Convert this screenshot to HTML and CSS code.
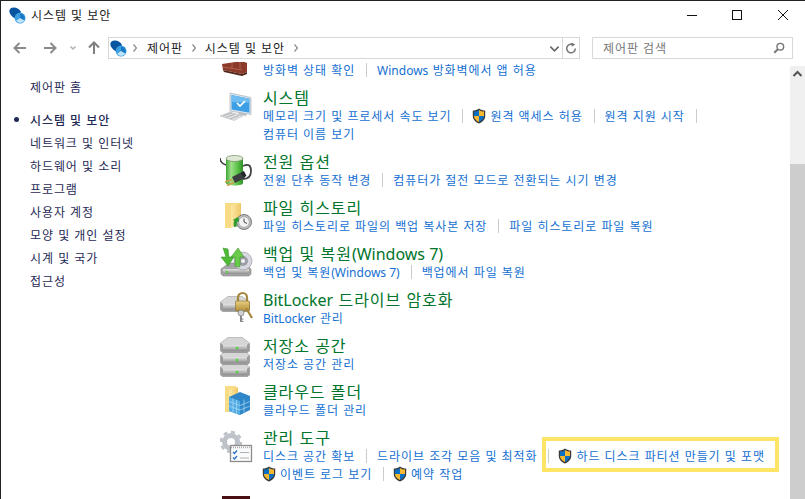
FILE: index.html
```html
<!DOCTYPE html>
<html lang="ko">
<head>
<meta charset="utf-8">
<title>시스템 및 보안</title>
<link rel="stylesheet" href="styles.css">
</head>
<body>
<svg class="defs" width="0" height="0" aria-hidden="true">
  <defs>
    <symbol id="sec" viewBox="0 0 20 20">
      <path d="M5.500 .5C2.500 .5 .4 2.200.4 5c0 3.500 3 5.800 6 8.200l6.600-3 1-4.700C12.500 2.500 9.500.5 5.500.5z" fill="#0a559f"/>
      <circle cx="13" cy="13" r="6.400" fill="#3d9fe0"/>
      <path d="M13 13l-4.600 3.200a5.600 5.600 0 0 0 9.700-.7z" fill="#bfe3f8"/>
      <path d="M13 7.500V13l4.900 2.500A5.600 5.600 0 0 0 13 7.500z" fill="#1b78c4"/>
    </symbol>
    <symbol id="shield" viewBox="0 0 14 16">
      <path d="M7 .5C5 2 3 2.600.8 2.600v5.400c0 3.500 2.700 6 6.200 7.500 3.500-1.500 6.200-4 6.200-7.500V2.600C11 2.600 9 2 7 .5z" fill="#3c3a36"/>
      <path d="M7 2C5.500 3 3.700 3.500 2 3.600V8h5z" fill="#0b6fc4"/>
      <path d="M7 2c1.500 1 3.300 1.500 5 1.600V8H7z" fill="#f7b92f"/>
      <path d="M2 8h5v6C4.200 12.700 2 10.800 2 8z" fill="#f7b92f"/>
      <path d="M7 8h5c0 2.800-2.200 4.700-5 6z" fill="#0b6fc4"/>
    </symbol>
    <linearGradient id="folder" x1="0" y1="0" x2="1" y2="0">
      <stop offset="0" stop-color="#fde9a6"/><stop offset="1" stop-color="#eec766"/>
    </linearGradient>
    <linearGradient id="disk" x1="0" y1="0" x2="0" y2="1">
      <stop offset="0" stop-color="#e4e4e4"/><stop offset="1" stop-color="#8c8c8c"/>
    </linearGradient>
    <linearGradient id="batt" x1="0" y1="0" x2="1" y2="0">
      <stop offset="0" stop-color="#3fa535"/><stop offset=".3" stop-color="#9fe08a"/><stop offset=".7" stop-color="#58c045"/><stop offset="1" stop-color="#2f8f2a"/>
    </linearGradient>
    <linearGradient id="gold" x1="0" y1="0" x2="0" y2="1">
      <stop offset="0" stop-color="#e8cd80"/><stop offset="1" stop-color="#b58f38"/>
    </linearGradient>
    <symbol id="drive" viewBox="0 0 30 16">
      <path d="M.5 6L8 .5h14L29.500 6v8l-2 1.500h-25L.5 14z" fill="#9c9c9c" stroke="#808080" stroke-width=".5"/>
      <path d="M.5 6L8 .5h14L29.500 6 27 8H3z" fill="#d6d6d6"/>
      <path d="M3 8h24v6H3z" fill="url(#disk)"/>
      <circle cx="17" cy="11" r="1.300" fill="#4fd63a"/>
    </symbol>
  </defs>
</svg>

<header class="titlebar">
  <div class="title">
    <svg class="ico16"><use href="#sec"/></svg>
    <span class="lift">시스템 및 보안</span>
  </div>
  <div class="winbtns">
    <svg class="winbtn" viewBox="0 0 46 30"><path d="M19 15.500h10" stroke="#111" fill="none"/></svg>
    <svg class="winbtn" viewBox="0 0 46 30"><rect x="18.500" y="10.500" width="9" height="9" stroke="#111" fill="none"/></svg>
    <svg class="winbtn" viewBox="0 0 46 30"><path d="M18 10l10 10M28 10L18 20" stroke="#111" fill="none"/></svg>
  </div>
</header>

<nav class="navbar">
  <div class="navbtns">
    <svg class="navbtn" viewBox="0 0 30 22"><path d="M17 11H6M10.500 6L5.500 11l5 5" stroke="#8a8a8a" stroke-width="2" fill="none"/></svg>
    <svg class="navbtn" viewBox="0 0 30 22"><path d="M5 11h11M11.500 6l5 5-5 5" stroke="#8a8a8a" stroke-width="2" fill="none"/></svg>
    <svg class="navdrop" viewBox="0 0 10 22"><path d="M1.500 9.500l2.500 2.500 2.500-2.500" stroke="#b0b0b0" stroke-width="1.500" fill="none"/></svg>
    <svg class="navup" viewBox="0 0 20 22"><path d="M10 17V6M5 10.500L10 5.500l5 5" stroke="#7f7f7f" stroke-width="2" fill="none"/></svg>
  </div>
  <div class="address">
    <svg class="ico16"><use href="#sec"/></svg>
    <svg class="chev first" viewBox="0 0 4 8"><path d="M.5 .5L3.500 4 .5 7.500" stroke="#888" stroke-width="1.200" fill="none"/></svg>
    <span class="lift">제어판</span>
    <svg class="chev" viewBox="0 0 4 8"><path d="M.5 .5L3.500 4 .5 7.500" stroke="#888" stroke-width="1.200" fill="none"/></svg>
    <span class="lift">시스템 및 보안</span>
    <svg class="chev" viewBox="0 0 4 8"><path d="M.5 .5L3.500 4 .5 7.500" stroke="#888" stroke-width="1.200" fill="none"/></svg>
    <span class="grow"></span>
    <svg class="adrop" viewBox="0 0 12 12"><path d="M1.500 4l4.500 4.500L10.500 4" stroke="#666" stroke-width="1.800" fill="none"/></svg>
    <span class="refresh">
      <svg viewBox="0 0 14 14" width="12" height="12"><path d="M9.500 3.200a5 5 0 1 0 2.500 4.300" stroke="#777" stroke-width="1.800" fill="none"/><path d="M7.500.5l4.500 2.500-4 2.500z" fill="#777"/></svg>
    </span>
  </div>
  <div class="search">
    <span class="lift">제어판 검색</span>
    <svg viewBox="0 0 14 14" width="12" height="12"><circle cx="8.500" cy="5.500" r="3.900" stroke="#777" stroke-width="1.700" fill="none"/><path d="M6 8l-4.500 4.500" stroke="#777" stroke-width="2.400"/></svg>
  </div>
</nav>

<div class="main">
  <aside class="side">
    <a class="side-home">제어판 홈</a>
    <a class="side-item current">시스템 및 보안</a>
    <a class="side-item">네트워크 및 인터넷</a>
    <a class="side-item">하드웨어 및 소리</a>
    <a class="side-item">프로그램</a>
    <a class="side-item">사용자 계정</a>
    <a class="side-item">모양 및 개인 설정</a>
    <a class="side-item">시계 및 국가</a>
    <a class="side-item">접근성</a>
  </aside>

  <section class="content">
    <div class="scrolled">
      <article class="cat">
        <svg class="cat-ico" viewBox="0 0 32 32">
          <path d="M2 19l20-3 5 2v9l-5 2-19-4z" fill="#8c3b2b"/>
          <path d="M3 25l19 4 5-2v2l-5 2-18-4z" fill="#4f241b"/>
          <path d="M3 22l19 3M12 18v6M20 17v7" stroke="#b86a55" stroke-width=".8"/>
        </svg>
        <div class="cat-body">
          <h2 class="cat-head">방화벽</h2>
          <p class="links"><a>방화벽 상태 확인</a><i></i><a><span class="la">Windows</span> 방화벽에서 앱 허용</a></p>
        </div>
      </article>

      <article class="cat">
        <svg class="cat-ico" viewBox="0 0 32 32">
          <path d="M10 2l21 4.500v17L10 20z" fill="#dfe6ec" stroke="#9aa7b2" stroke-width=".6"/>
          <path d="M11.500 4l18 3.800v14L11.500 18.500z" fill="#3d9fe6"/>
          <path d="M11.500 4l18 3.800v4L11.500 11z" fill="#6dbcf2"/>
          <path d="M17 12l3 3 5-5" stroke="#fff" stroke-width="1.700" fill="none"/>
          <path d="M19 21l8 1.500-1 2.500-8-1.500z" fill="#b8c0c8"/>
          <path d="M0 25l10-4 13 4-9 4.500z" fill="#dde0e3" stroke="#b5b5b5" stroke-width=".5"/>
          <path d="M3 25l9-3.200M6 26.500l9-3.500M10 28l9-3.500" stroke="#a0a0a0" stroke-width=".7"/>
        </svg>
        <div class="cat-body">
          <h2 class="cat-head">시스템</h2>
          <p class="links"><a>메모리 크기 및 프로세서 속도 보기</a><i></i><a class="uac"><svg class="shield"><use href="#shield"/></svg>원격 액세스 허용</a><i></i><a>원격 지원 시작</a><i></i></p>
          <p class="links"><a>컴퓨터 이름 보기</a></p>
        </div>
      </article>

      <article class="cat">
        <svg class="cat-ico" viewBox="0 0 32 32">
          <path d="M0 3c0 4 3 6 6 7" stroke="#444" stroke-width="1.600" fill="none"/>
          <path d="M23 11c6-3 8 0 8 5 0 6-4 8-8 8" stroke="#444" stroke-width="1.800" fill="none"/>
          <path d="M6 3h17v25c0 1.500-3 2.500-8.500 2.500S6 29.500 6 28z" fill="url(#batt)"/>
          <ellipse cx="14.500" cy="3.500" rx="8.500" ry="3" fill="#dfe8d6" stroke="#6b8a58" stroke-width=".7"/>
          <path d="M12 22l10-5 3 6-10 5z" fill="#3b3f42"/>
          <path d="M21 17.500l3-1.500 2.500 5-3 1.500z" fill="#23262a"/>
          <path d="M12.500 24.500l-7.500 2.500M14 27.500l-7 3" stroke="#c9a04c" stroke-width="1.800"/>
        </svg>
        <div class="cat-body">
          <h2 class="cat-head">전원 옵션</h2>
          <p class="links"><a>전원 단추 동작 변경</a><i></i><a>컴퓨터가 절전 모드로 전환되는 시기 변경</a></p>
        </div>
      </article>

      <article class="cat">
        <svg class="cat-ico" viewBox="0 0 32 32">
          <path d="M5 2h16v19L10 27H5z" fill="#f8dc85"/>
          <path d="M11 5l10-3v20l-10 5z" fill="url(#folder)"/>
          <circle cx="24" cy="21" r="7.500" fill="#bdbdbd" stroke="#7a7a7a"/>
          <circle cx="24" cy="21" r="5.300" fill="#f2f2f2" stroke="#999" stroke-width=".6"/>
          <path d="M24 17.500V21l3 1.500" stroke="#444" fill="none"/>
          <path d="M14 26a9 9 0 0 1 3-9.500l1.500 2.500a6 6 0 0 0-1.500 6.500z" fill="#2f9d2d"/>
          <path d="M12.500 19l6-3 .5 5z" fill="#2f9d2d"/>
        </svg>
        <div class="cat-body">
          <h2 class="cat-head">파일 히스토리</h2>
          <p class="links"><a>파일 히스토리로 파일의 백업 복사본 저장</a><i></i><a>파일 히스토리로 파일 복원</a></p>
        </div>
      </article>

      <article class="cat">
        <svg class="cat-ico" viewBox="0 0 32 32">
          <path d="M1 22l8-6h16l6 6v5l-2 2H3l-2-2z" fill="#a5a5a5" stroke="#777" stroke-width=".5"/>
          <path d="M3 22h26v5H3z" fill="url(#disk)"/>
          <circle cx="7" cy="25" r="1.200" fill="#4fd63a"/>
          <circle cx="23" cy="14" r="9" fill="#d8d8e2" stroke="#8f8f8f" stroke-width=".6"/>
          <circle cx="23" cy="14" r="5" fill="#9c9ca6"/>
          <circle cx="23" cy="14" r="2" fill="#f2f2f2"/>
          <path d="M3 1l5 1 1 8h5l-6 9-7-9h5z" fill="#4fbb34" stroke="#2f8a22" stroke-width=".5"/>
          <path d="M18 1l6 9h-4v10l-5-1V10h-4z" fill="#6acb4a" stroke="#2f8a22" stroke-width=".5"/>
        </svg>
        <div class="cat-body">
          <h2 class="cat-head">백업 및 복원<span class="la">(Windows 7)</span></h2>
          <p class="links"><a>백업 및 복원<span class="la">(Windows 7)</span></a><i></i><a>백업에서 파일 복원</a></p>
        </div>
      </article>

      <article class="cat">
        <svg class="cat-ico" viewBox="0 0 32 32">
          <use href="#drive" x="0" y="3" width="30" height="16"/>
          <path d="M18 9V4.500a4.500 4.500 0 0 1 9 0V9" stroke="#a5873d" stroke-width="2.200" fill="none"/>
          <rect x="15.500" y="8" width="14" height="10" rx="1" fill="url(#gold)" stroke="#86692a" stroke-width=".6"/>
          <path d="M26 15l6 10" stroke="#a5873d" stroke-width="2.200"/>
          <circle cx="21" cy="20" r="3" fill="#d0d0d0" stroke="#777" stroke-width=".7"/>
          <path d="M21 23v6" stroke="#888" stroke-width="2"/>
          <path d="M21.500 26h2M21.500 28.500h2" stroke="#888"/>
        </svg>
        <div class="cat-body">
          <h2 class="cat-head"><span class="la">BitLocker</span> 드라이브 암호화</h2>
          <p class="links"><a><span class="la">BitLocker</span> 관리</a></p>
        </div>
      </article>

      <article class="cat">
        <svg class="cat-ico" viewBox="0 0 32 32">
          <use href="#drive" x="0" y="22" width="30" height="16"/>
          <use href="#drive" x="0" y="10" width="30" height="16"/>
          <use href="#drive" x="0" y="-2" width="30" height="16"/>
        </svg>
        <div class="cat-body">
          <h2 class="cat-head">저장소 공간</h2>
          <p class="links"><a>저장소 공간 관리</a></p>
        </div>
      </article>

      <article class="cat">
        <svg class="cat-ico" viewBox="0 0 32 32">
          <path d="M5 1h11v22L9 27H5z" fill="#f8dc85"/>
          <path d="M9 5l9-3v19L9 27z" fill="url(#folder)"/>
          <path d="M20 7l10 4v14l-10 5-11-4V12z" fill="#2f86c8"/>
          <path d="M9 12l11 4v14L9 26z" fill="#55ace4"/>
          <path d="M9 16.500l11 4 10-4M9 21l11 4 10-4M13 13.500v14M16.500 15v14M24 14.500v13" stroke="#a9dcf5" stroke-width=".7" fill="none"/>
        </svg>
        <div class="cat-body">
          <h2 class="cat-head">클라우드 폴더</h2>
          <p class="links"><a>클라우드 폴더 관리</a></p>
        </div>
      </article>

      <article class="cat">
        <svg class="cat-ico" viewBox="0 0 32 32">
          <circle cx="11" cy="11" r="6.500" fill="none" stroke="#bcc2c8" stroke-width="5"/>
          <circle cx="11" cy="11" r="10" fill="none" stroke="#bcc2c8" stroke-width="2.500" stroke-dasharray="4 3.800"/>
          <rect x="10.500" y="14.500" width="21" height="16" fill="#fafbfc" stroke="#8d8d8d" stroke-width="1.300"/>
          <path d="M11 16.500h20" stroke="#aaa" stroke-width="1.500" stroke-dasharray="1 1"/>
          <path d="M13 21l1.500 1.500 2.500-3M13 26.500l1.500 1.500 2.500-3" stroke="#2c6fc4" stroke-width="1.300" fill="none"/>
          <path d="M20 21.500h9M20 27h9" stroke="#b0b0b0"/>
        </svg>
        <div class="cat-body">
          <h2 class="cat-head">관리 도구</h2>
          <p class="links"><a>디스크 공간 확보</a><i></i><a>드라이브 조각 모음 및 최적화</a><i></i><a class="uac marked"><svg class="shield"><use href="#shield"/></svg>하드 디스크 파티션 만들기 및 포맷</a></p>
          <p class="links"><a class="uac"><svg class="shield"><use href="#shield"/></svg>이벤트 로그 보기</a><i></i><a class="uac"><svg class="shield"><use href="#shield"/></svg>예약 작업</a></p>
        </div>
      </article>

      <article class="cat cat-next">
        <svg class="cat-ico" viewBox="0 0 32 32"><rect x="2" y="0" width="28" height="30" fill="#4a0f12"/></svg>
        <div class="cat-body"></div>
      </article>
    </div>
  </section>

  <div class="scrollbar">
    <svg class="sb-arrow" viewBox="0 0 15 17"><path d="M3.500 10l4-4 4 4" stroke="#555" stroke-width="2" fill="none"/></svg>
    <div class="sb-track"></div>
    <div class="sb-thumb"></div>
  </div>
</div>
</body>
</html>
```

FILE: styles.css
```css
* { box-sizing: border-box; }
html, body { margin: 0; height: 100%; }
body {
  width: 805px;
  height: 499px;
  overflow: hidden;
  background: #fff;
  border-top: 1px solid #222;
  border-left: 1px solid #222;
  font-family: "Noto Sans CJK KR", "Noto Sans", sans-serif;
  font-size: 12px;
  letter-spacing: .9px;
  color: #1a1a1a;
  display: flex;
  flex-direction: column;
}
.defs { position: absolute; }
a { cursor: pointer; }
.la { font-family: "Noto Sans", sans-serif; letter-spacing: 0; line-height: 0; }
.lift { margin-top: -2px; }

.titlebar {
  height: 28px;
  display: flex;
  justify-content: space-between;
  align-items: center;
  flex: none;
}
.title { display: flex; align-items: center; gap: 5px; padding-left: 8px; }
.ico16 { width: 17px; height: 17px; flex: none; }
.winbtns { display: flex; margin-right: -1px; }
.winbtn { width: 46px; height: 30px; }

.navbar {
  height: 22px;
  margin-top: 8px;
  display: flex;
  align-items: stretch;
  flex: none;
  padding-right: 12px;
}
.navbtns { width: 107px; flex: none; padding-left: 8px; display: flex; align-items: center; }
.navbtn { width: 30px; height: 22px; }
.navdrop { width: 10px; height: 22px; }
.navup { width: 20px; height: 22px; margin-left: 5px; }
.address {
  width: 472px;
  flex: none;
  border: 1px solid #d9d9d9;
  display: flex;
  align-items: center;
  padding-left: 1px;
}
.chev { width: 4px; height: 8px; margin: 0 9px; flex: none; }
.chev.first { margin: 0 10px 0 6px; }
.grow { flex: 1; }
.adrop { width: 11px; height: 11px; margin-right: 2px; }
.refresh {
  width: 17px;
  height: 100%;
  border-left: 1px solid #d9d9d9;
  display: flex;
  align-items: center;
  justify-content: center;
}
.search {
  width: 201px;
  flex: none;
  margin-left: 12px;
  border: 1px solid #d9d9d9;
  display: flex;
  align-items: center;
  justify-content: space-between;
  padding: 0 7px 0 10px;
  color: #777;
}

.main { flex: 1; display: flex; min-height: 0; margin-top: 3px; }
.side {
  width: 219px;
  flex: none;
  display: flex;
  flex-direction: column;
  padding: 13px 0 0 29px;
  color: #1f2a55;
}
.side-home { height: 23px; margin-bottom: 10px; line-height: 23px; }
.side-item { height: 23px; line-height: 23px; position: relative; }
.current { font-weight: 500; }
.current::before {
  content: "";
  position: absolute;
  left: -16px;
  top: 9px;
  width: 5px;
  height: 5px;
  border-radius: 50%;
  background: #1f2a55;
}

.content { flex: 1; overflow: hidden; min-width: 0; }
.scrolled { margin-top: -21px; display: flex; flex-direction: column; }
.cat { display: flex; gap: 11px; margin-bottom: 8px; }
.cat-next { margin-top: 1px; }
.cat-ico { width: 32px; height: 32px; flex: none; margin-top: 4px; overflow: visible; }
.cat-body { min-width: 0; }
.cat-head {
  margin: 0;
  font-size: 16px;
  font-weight: 400;
  line-height: 20px;
  color: #00752b;
  letter-spacing: .9px;
}
.links {
  margin: 0;
  display: flex;
  align-items: center;
  height: 18px;
  line-height: 18px;
  color: #1470d2;
  white-space: nowrap;
}
.links i { width: 1px; height: 14px; background: #ccc; margin: 0 10px 0 11px; flex: none; }
.uac { display: inline-flex; align-items: center; }
.shield { width: 14px; height: 16px; margin: 0 4px 0 -1px; flex: none; }
.marked { position: relative; }
.marked::after {
  content: "";
  position: absolute;
  top: -10px;
  bottom: -7px;
  left: -17px;
  right: -14px;
  border: 4px solid #ffe566;
}

.scrollbar { width: 15px; flex: none; margin-top: 4px; display: flex; flex-direction: column; background: #f0f0f0; }
.sb-arrow { width: 15px; height: 17px; flex: none; }
.sb-track { height: 81px; flex: none; }
.sb-thumb { flex: 1; background: #cdcdcd; }
```
